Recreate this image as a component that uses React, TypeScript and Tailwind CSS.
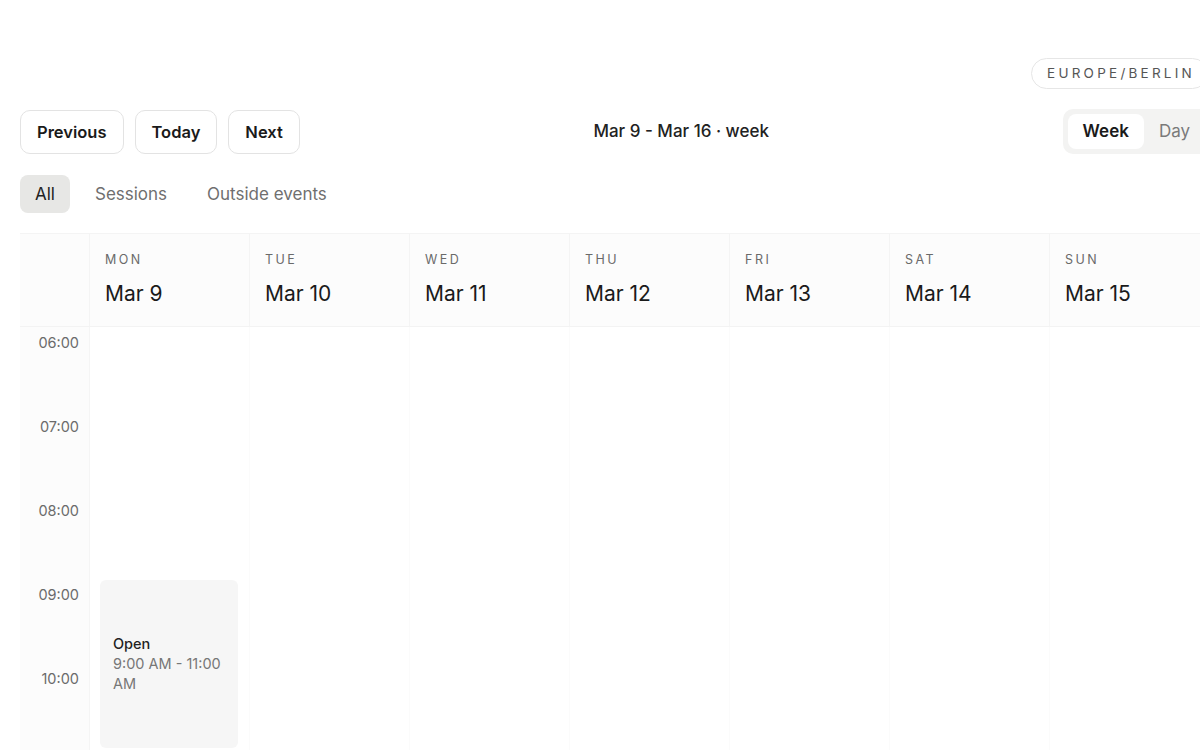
import React, { useState } from "react";

const days = [
  { dow: "MON", date: "Mar 9" },
  { dow: "TUE", date: "Mar 10" },
  { dow: "WED", date: "Mar 11" },
  { dow: "THU", date: "Mar 12" },
  { dow: "FRI", date: "Mar 13" },
  { dow: "SAT", date: "Mar 14" },
  { dow: "SUN", date: "Mar 15" },
];

const hours = Array.from({ length: 17 }, (_, i) => `${String(i + 6).padStart(2, "0")}:00`);

const filters = ["All", "Sessions", "Outside events"];

// 84px per hour
const ROW_H = 84;

const App: React.FC = () => {
  const [filter, setFilter] = useState("All");
  const [view, setView] = useState("Week");

  return (
    <div className="min-h-screen bg-white text-[#1c1c1c] font-['Inter','Liberation_Sans',sans-serif]">
      <div className="w-[1190px] ml-5 pt-[58px]">
        {/* timezone */}
        <div className="flex justify-end pr-[2px]">
          <span className="h-[31px] flex items-center rounded-full border border-[#e6e6e6] pl-[15px] pr-[12px] text-[13.5px] tracking-[0.24em] text-[#555]">
            EUROPE/BERLIN
          </span>
        </div>

        {/* toolbar */}
        <div className="mt-5 flex items-center">
          <div className="flex gap-[11px]">
            {["Previous", "Today", "Next"].map((b) => (
              <button
                key={b}
                className="h-11 px-4 rounded-[10px] border border-[#e3e3e3] bg-white text-[16.5px] leading-6 pt-[1px] font-semibold text-[#1a1a1a]"
              >
                {b}
              </button>
            ))}
          </div>
          <div className="flex-1 text-center text-[17px] pt-[1px] font-medium text-[#222]">
            Mar 9 - Mar 16 · week
          </div>
          <div className="flex p-[5px] rounded-[10px] bg-[#f3f3f2]">
            {["Week", "Day"].map((v) => (
              <button
                key={v}
                onClick={() => setView(v)}
                className={
                  view === v
                    ? "h-[35px] px-[15px] rounded-[8px] bg-white text-[17px] font-semibold text-[#1a1a1a]"
                    : "h-[35px] px-[15px] rounded-[8px] text-[17px] text-[#7a7a7a]"
                }
              >
                {v}
              </button>
            ))}
          </div>
        </div>

        {/* filters */}
        <div className="mt-[21px] flex gap-[10px]">
          {filters.map((f) => (
            <button
              key={f}
              onClick={() => setFilter(f)}
              className={
                filter === f
                  ? "h-[38px] px-[15px] pt-[1px] rounded-[8px] bg-[#e7e7e5] text-[17px] text-[#222]"
                  : "h-[38px] px-[15px] pt-[1px] rounded-[8px] text-[17px] text-[#6f6f6f]"
              }
            >
              {f}
            </button>
          ))}
        </div>

        {/* calendar */}
        <div className="mt-5 border-t border-[#f4f4f4]">
          <div className="grid grid-cols-[69px_repeat(7,160px)] border-b border-[#f3f3f3]">
            <div className="bg-[#fcfcfc] h-[92px]" />
            {days.map((d) => (
              <div key={d.dow} className="h-[92px] bg-[#fcfcfc] border-l border-[#f4f4f4] pt-[18px] pl-[15px]">
                <div className="text-[12.5px] leading-4 tracking-[0.2em] text-[#6a6a6a]">{d.dow}</div>
                <div className="mt-[12px] text-[21px] leading-7 text-[#1a1a1a]">{d.date}</div>
              </div>
            ))}
          </div>

          <div className="grid grid-cols-[69px_repeat(7,160px)]">
            <div className="bg-[#fcfcfc]">
              {hours.map((h) => (
                <div key={h} className="h-[84px] pt-[6px] pr-[10px] text-right text-[14.5px] leading-5 text-[#6b6b6b]">
                  {h}
                </div>
              ))}
            </div>
            {days.map((d, i) => (
              <div
                key={d.dow}
                className={i === 0 ? "relative border-l border-[#f5f5f5]" : "relative border-l border-[#fbfbfb]"}
                style={{ height: hours.length * ROW_H }}
              >
                {i === 0 && (
                  <div
                    className="absolute left-[10px] right-[11px] rounded-[6px] bg-[#f6f6f6] px-[13px] flex flex-col justify-center"
                    style={{ top: 3 * ROW_H + 1, height: 2 * ROW_H }}
                  >
                    <div className="text-[14.5px] leading-5 font-medium text-[#222]">Open</div>
                    <div className="text-[14.5px] leading-5 text-[#777]">9:00 AM - 11:00 AM</div>
                  </div>
                )}
              </div>
            ))}
          </div>
        </div>
      </div>
    </div>
  );
};

export default App;
